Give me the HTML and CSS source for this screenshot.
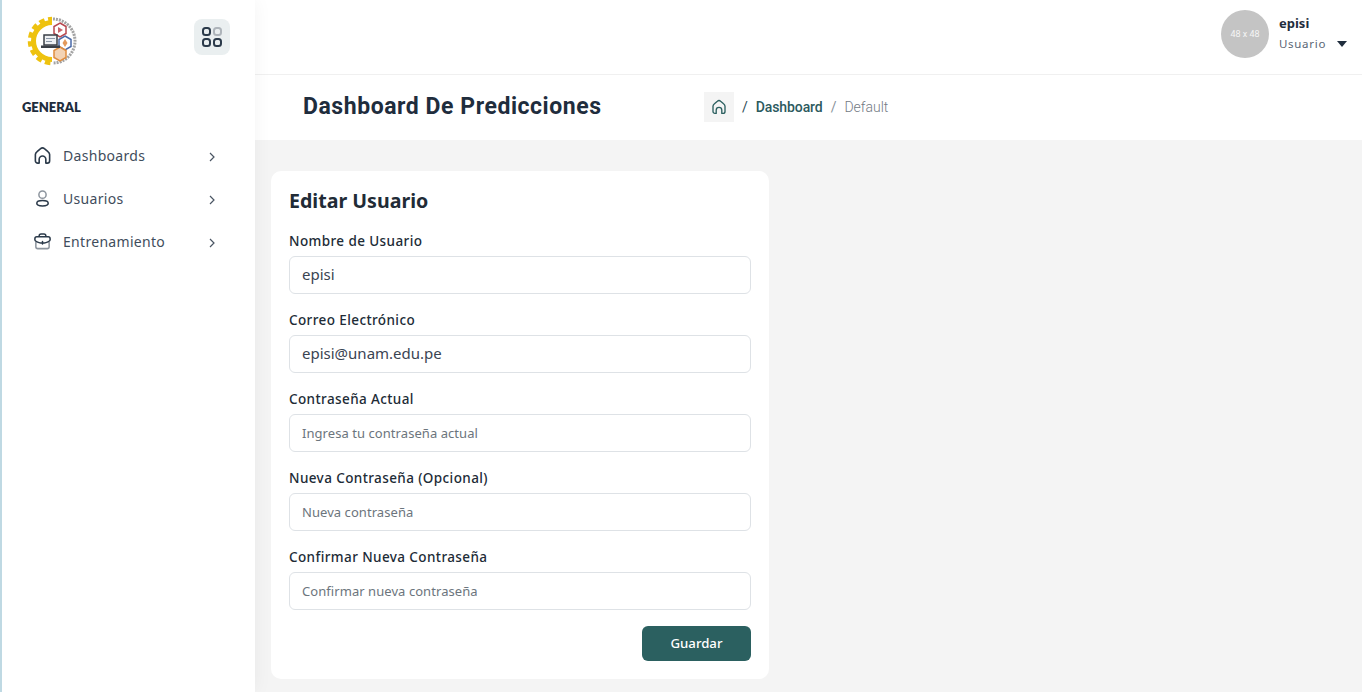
FILE: index.html
```html
<!DOCTYPE html>
<html lang="es">
<head>
<meta charset="utf-8">
<title>Editar Usuario</title>
<link rel="stylesheet" href="styles.css">
</head>
<body>
<div class="app">
  <aside class="sidebar">
    <div class="brand">
      <svg class="logo" width="52" height="50" viewBox="0 0 52 50">
        <defs>
          <clipPath id="half"><rect x="0" y="0" width="26" height="50"/></clipPath>
        </defs>
        <g clip-path="url(#half)" fill="none" stroke="#eec20f">
          <circle cx="26" cy="25" r="18.500" stroke-width="5"/>
          <circle cx="26" cy="25" r="22" stroke-width="4.500" stroke-dasharray="5.500 3.500"/>
        </g>
        <path d="M27 3a22 22 0 0 1 0 44" fill="none" stroke="#a3a3a3" stroke-width="3" stroke-dasharray="2 1"/>
        <path d="M34 7l6 3.500v7L34 21l-6-3.500v-7z" fill="#fff" stroke="#b8474f" stroke-width="1.500"/>
        <path d="M32 11l5 3-5 3z" fill="#c9636a"/>
        <path d="M39 20l6 3.500v7L39 34l-6-3.500v-7z" fill="#fff" stroke="#4a6aa8" stroke-width="1.500"/>
        <path d="M39 23l2.500 4-2.500 4-2.500-4z" fill="#e39a5c"/>
        <path d="M34 31l6 3.500v7L34 45l-6-3.500v-7z" fill="#f3d3b4" stroke="#e08d3f" stroke-width="1.500"/>
        <rect x="18" y="19" width="13" height="10" fill="#eef0f3" stroke="#3a3f47" stroke-width="1.500"/>
        <path d="M20 22.500h9M20 25.500h6" stroke="#8a97a8" stroke-width="1.200"/>
        <rect x="15" y="29.500" width="19" height="2.500" fill="#3a3f47"/>
      </svg>
      <button class="grid-btn" type="button" aria-label="Menú">
        <svg width="20" height="20" viewBox="0 0 20 20" fill="none" stroke-width="2">
          <rect x="1" y="1" width="7" height="7" rx="2.500" stroke="#2b3a4a"/>
          <rect x="12" y="1" width="7" height="7" rx="2.500" stroke="#aeb4ba"/>
          <rect x="1" y="12" width="7" height="7" rx="2.500" stroke="#2b3a4a"/>
          <rect x="12" y="12" width="7" height="7" rx="2.500" stroke="#2b3a4a"/>
        </svg>
      </button>
    </div>
    <div class="section-title">GENERAL</div>
    <nav class="nav">
      <a class="nav-item">
        <svg class="nav-icon" viewBox="0 0 20 20" fill="none" stroke="#2b3a4a" stroke-width="1.700" stroke-linejoin="round" stroke-linecap="round">
          <path d="M2.500 9c0-1.500.8-2.300 1.800-3.100L8 2.800a3 3 0 0 1 4 0l3.700 3.100c1 .8 1.800 1.600 1.800 3.100v6.500a2.500 2.500 0 0 1-2.500 2.500h-1.500v-4a3.500 3.500 0 0 0-7 0v4H5a2.500 2.500 0 0 1-2.500-2.500z"/>
        </svg>
        <span class="nav-label">Dashboards</span>
        <svg class="chev" viewBox="0 0 8 10" fill="none" stroke="#4a5563" stroke-width="1.200"><path d="M2 1l4 4-4 4"/></svg>
      </a>
      <a class="nav-item">
        <svg class="nav-icon" viewBox="0 0 20 20" fill="none" stroke-width="1.600">
          <circle cx="10" cy="6" r="3.800" stroke="#8d959e"/>
          <ellipse cx="10" cy="15" rx="6" ry="2.800" stroke="#2b3a4a"/>
        </svg>
        <span class="nav-label">Usuarios</span>
        <svg class="chev" viewBox="0 0 8 10" fill="none" stroke="#4a5563" stroke-width="1.200"><path d="M2 1l4 4-4 4"/></svg>
      </a>
      <a class="nav-item">
        <svg class="nav-icon" viewBox="0 0 20 20" fill="none" stroke-width="1.600" stroke-linecap="round">
          <path d="M3 11v4.500a2 2 0 0 0 2 2h10a2 2 0 0 0 2-2V11" stroke="#8d959e"/>
          <path d="M6.500 5V4a2 2 0 0 1 2-2h3a2 2 0 0 1 2 2v1M4 5h12a2 2 0 0 1 2 2v1.500c0 1-4 3-6 3H8c-2 0-6-2-6-3V7a2 2 0 0 1 2-2zM10 10v2.500" stroke="#2b3a4a"/>
        </svg>
        <span class="nav-label">Entrenamiento</span>
        <svg class="chev" viewBox="0 0 8 10" fill="none" stroke="#4a5563" stroke-width="1.200"><path d="M2 1l4 4-4 4"/></svg>
      </a>
    </nav>
  </aside>
  <div class="main">
    <header class="topbar">
      <div class="avatar">48 x 48</div>
      <div class="user">
        <div class="user-name">episi</div>
        <div class="user-role">Usuario <span class="caret"></span></div>
      </div>
    </header>
    <div class="page-head">
      <h1 class="page-title">Dashboard De Predicciones</h1>
      <div class="crumbs">
        <span class="crumb-home">
          <svg width="16" height="16" viewBox="0 0 20 20" fill="none" stroke="#2c6060" stroke-width="1.700" stroke-linejoin="round">
            <path d="M2.500 9c0-1.500.8-2.300 1.800-3.100L8 2.800a3 3 0 0 1 4 0l3.700 3.100c1 .8 1.800 1.600 1.800 3.100v6.500a2.500 2.500 0 0 1-2.500 2.500h-1.500v-4a3.500 3.500 0 0 0-7 0v4H5a2.500 2.500 0 0 1-2.500-2.500z"/>
          </svg>
        </span>
        <span class="crumb-sep">/</span>
        <span class="crumb-link">Dashboard</span>
        <span class="crumb-sep light">/</span>
        <span class="crumb-current">Default</span>
      </div>
    </div>
    <main class="content">
      <form class="card">
        <h2 class="card-title">Editar Usuario</h2>
        <div class="field">
          <label class="label">Nombre de Usuario</label>
          <input class="input" type="text" value="episi">
        </div>
        <div class="field">
          <label class="label">Correo Electrónico</label>
          <input class="input" type="email" value="episi@unam.edu.pe">
        </div>
        <div class="field">
          <label class="label">Contraseña Actual</label>
          <input class="input" type="password" placeholder="Ingresa tu contraseña actual">
        </div>
        <div class="field">
          <label class="label">Nueva Contraseña (Opcional)</label>
          <input class="input" type="password" placeholder="Nueva contraseña">
        </div>
        <div class="field">
          <label class="label">Confirmar Nueva Contraseña</label>
          <input class="input" type="password" placeholder="Confirmar nueva contraseña">
        </div>
        <div class="actions">
          <button class="save" type="button">Guardar</button>
        </div>
      </form>
    </main>
  </div>
</div>
</body>
</html>
```
FILE: styles.css
```css
* { box-sizing: border-box; }
html, body { margin: 0; height: 100%; overflow: hidden; }
body { font-family: "Noto Sans", "Open Sans", sans-serif; color: #1f2d3d; background: #f4f4f4; }
.app { display: flex; height: 692px; }
.sidebar { width: 255px; flex: none; background: #fff; border-left: 2px solid #bfd9e3; box-shadow: 0 0 18px rgba(0, 0, 0, .05); z-index: 1; }
.brand { height: 74px; padding: 14px 25px 0 24px; display: flex; justify-content: space-between; align-items: flex-start; }
.logo { display: block; margin-top: 2px; }
.grid-btn { width: 36px; height: 36px; margin-top: 5px; padding: 0; border: 0; border-radius: 8px; background: #eaeff0; display: flex; align-items: center; justify-content: center; }
.section-title { margin: 25px 0 0 20px; font-family: Lato, sans-serif; font-size: 13px; line-height: 16px; font-weight: 800; color: #1f2d3d; letter-spacing: -.05px; }
.nav { margin-top: 20px; padding: 0 37px 0 31px; }
.nav-item { display: flex; align-items: center; height: 43px; color: #3f4d5c; }
.nav-icon { width: 19px; height: 19px; flex: none; margin-right: 11px; margin-bottom: 3px; }
.nav-label { flex: 1; font-size: 14px; letter-spacing: .3px; padding-bottom: 2px; }
.chev { width: 8px; height: 10px; flex: none; margin-right: 2px; }
.main { flex: 1; min-width: 0; display: flex; flex-direction: column; }
.topbar { height: 75px; flex: none; background: #fff; border-bottom: 1px solid #f0f0f0; display: flex; justify-content: flex-end; align-items: flex-start; padding: 10px 15px 0 0; }
.avatar { width: 48px; height: 48px; border-radius: 50%; background: #c4c4c4; color: #f5f5f5; font-family: Roboto, sans-serif; font-size: 9px; display: flex; align-items: center; justify-content: center; }
.user { margin-left: 10px; width: 68px; }
.user-name { font-size: 13px; font-weight: 700; line-height: 18px; margin-top: 4px; color: #1f2d3d; }
.user-role { font-size: 11.500px; line-height: 16px; margin-top: 4px; color: #5a6675; letter-spacing: .7px; white-space: nowrap; display: flex; align-items: center; justify-content: space-between; }
.caret { width: 0; height: 0; border-left: 5.500px solid transparent; border-right: 5.500px solid transparent; border-top: 6px solid #1f2d3d; }
.page-head { height: 65px; flex: none; background: #fff; display: flex; align-items: center; padding: 0 0 2px 48px; }
.page-title { margin: 0; width: 401px; font-family: Roboto, sans-serif; font-size: 23px; font-weight: 700; letter-spacing: .55px; color: #1f2d3d; white-space: nowrap; }
.crumbs { display: flex; align-items: center; font-family: Roboto, sans-serif; font-size: 14px; }
.crumb-home { width: 30px; height: 30px; background: #f4f4f4; display: flex; align-items: center; justify-content: center; }
.crumb-sep { margin: 0 8px; color: #2c4a55; }
.crumb-sep.light { color: #8a929a; }
.crumb-link { color: #2c5a5e; font-weight: 500; letter-spacing: -.1px; }
.crumb-current { color: #737b84; font-weight: 300; }
.content { flex: 1; padding: 31px 16px 0; }
.card { width: 498px; height: 508px; background: #fff; border-radius: 10px; padding: 16px 18px 0; }
.card-title { margin: 0 0 18px; font-size: 19.600px; line-height: 27px; font-weight: 700; color: #212b36; }
.field { margin-bottom: 17px; }
.label { display: block; font-size: 13.500px; line-height: 19px; font-weight: 500; letter-spacing: .4px; color: #212b36; margin-bottom: 5px; }
.input { display: block; width: 100%; height: 38px; padding: 0 12px 2px; border: 1px solid #dee2e6; border-radius: 6px; background: #fff; font-family: "Noto Sans", sans-serif; font-size: 15px; color: #3a4452; outline: 0; }
.input::placeholder { font-size: 13px; letter-spacing: .06px; color: #6c757d; opacity: 1; }
.actions { display: flex; justify-content: flex-end; margin-top: -1px; }
.save { width: 109px; height: 35px; padding: 0 0 2px; border: 0; border-radius: 6px; background: #2b6060; color: #fff; font-family: "Noto Sans", sans-serif; font-size: 13.200px; font-weight: 500; }
```
